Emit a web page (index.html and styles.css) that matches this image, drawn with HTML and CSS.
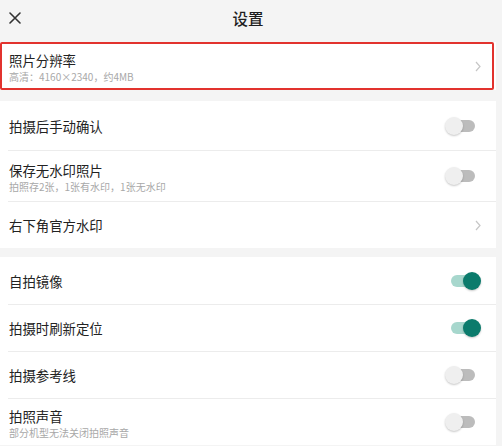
FILE: index.html
```html
<!DOCTYPE html>
<html lang="zh">
<head>
<meta charset="utf-8">
<link rel="stylesheet" href="styles.css">
</head>
<body>
<div class="page">
  <header class="topbar">
    <svg class="close" width="12" height="12" viewBox="0 0 12 12"><path d="M1 1L11 11M11 1L1 11" stroke="#333" stroke-width="1.6" fill="none" stroke-linecap="round"/></svg>
    <div class="title">设置</div>
  </header>

  <section class="group first">
    <div class="row highlight">
      <div class="text">
        <div class="label">照片分辨率</div>
        <div class="sub">高清：4160×2340，约4MB</div>
      </div>
      <svg class="chev" width="6" height="11" viewBox="0 0 6 11"><path d="M1 1L5 5.5L1 10" stroke="#c6c6c6" stroke-width="1.2" fill="none"/></svg>
    </div>
  </section>

  <section class="group g2">
    <div class="row">
      <div class="label">拍摄后手动确认</div>
      <div class="toggle"><span class="track"></span><span class="knob"></span></div>
    </div>
    <div class="row line tall">
      <div class="text">
        <div class="label">保存无水印照片</div>
        <div class="sub">拍照存2张，1张有水印，1张无水印</div>
      </div>
      <div class="toggle"><span class="track"></span><span class="knob"></span></div>
    </div>
    <div class="row line short">
      <div class="label">右下角官方水印</div>
      <svg class="chev" width="6" height="11" viewBox="0 0 6 11"><path d="M1 1L5 5.5L1 10" stroke="#c6c6c6" stroke-width="1.2" fill="none"/></svg>
    </div>
  </section>

  <section class="group g3">
    <div class="row">
      <div class="label">自拍镜像</div>
      <div class="toggle on"><span class="track"></span><span class="knob"></span></div>
    </div>
    <div class="row line">
      <div class="label">拍摄时刷新定位</div>
      <div class="toggle on"><span class="track"></span><span class="knob"></span></div>
    </div>
    <div class="row line">
      <div class="label">拍摄参考线</div>
      <div class="toggle"><span class="track"></span><span class="knob"></span></div>
    </div>
    <div class="row line">
      <div class="text">
        <div class="label">拍照声音</div>
        <div class="sub">部分机型无法关闭拍照声音</div>
      </div>
      <div class="toggle"><span class="track"></span><span class="knob"></span></div>
    </div>
  </section>
</div>
</body>
</html>
```

FILE: styles.css
```css
html, body {
  margin: 0;
  padding: 0;
  background: #f4f4f4;
}
body {
  font-family: "Noto Sans CJK SC", "Noto Sans", sans-serif;
  color: #222;
  width: 502px;
  height: 446px;
  overflow: hidden;
}
.page {
  width: 496px;
}
.topbar {
  height: 41px;
  display: flex;
  align-items: flex-start;
  padding-top: 9px;
  box-sizing: border-box;
  background: #f4f4f4;
}
.close {
  margin: 3px 0 0 9px;
  flex: none;
}
.title {
  flex: 1;
  text-align: center;
  font-size: 15.5px;
  line-height: 18px;
  font-weight: 500;
  color: #1e1e1e;
  margin-right: 21px;
}
.group {
  background: #fff;
}
.group.first {
  padding-right: 2px;
}
.g2 {
  margin-top: 11px;
}
.g3 {
  margin-top: 9px;
}
.row {
  display: flex;
  align-items: center;
  justify-content: space-between;
  height: 49px;
  margin-left: 8px;
  padding: 0 15px 0 1px;
  box-sizing: border-box;
}
.row.line {
  border-top: 1px solid #ececec;
}
.row.tall {
  height: 51px;
}
.row.short {
  height: 47px;
}
.g3 .row {
  height: 47px;
}
.row.highlight {
  margin-left: 0;
  height: 48px;
  padding: 0 11px 0 7px;
  border: 2px solid #e2332e;
  border-radius: 2px;
  margin-top: 1px;
}
.text {
  display: flex;
  flex-direction: column;
  padding-top: 3px;
}
.label {
  font-size: 13.4px;
  line-height: 18px;
  color: #222;
}
.sub {
  font-size: 10px;
  line-height: 16px;
  color: #a8a8a8;
}
.chev {
  flex: none;
}
.toggle {
  position: relative;
  width: 36px;
  height: 18px;
  flex: none;
}
.track {
  position: absolute;
  left: 6px;
  top: 3px;
  width: 24px;
  height: 12px;
  border-radius: 6px;
  background: #bcbcbc;
}
.knob {
  position: absolute;
  left: 0;
  top: 0;
  width: 18px;
  height: 18px;
  border-radius: 50%;
  background: #efefef;
  box-shadow: 0 1px 2px rgba(0, 0, 0, 0.22);
}
.toggle.on .track {
  background: #a7d7cd;
}
.toggle.on .knob {
  left: 18px;
  background: #0b7b6c;
}
```
